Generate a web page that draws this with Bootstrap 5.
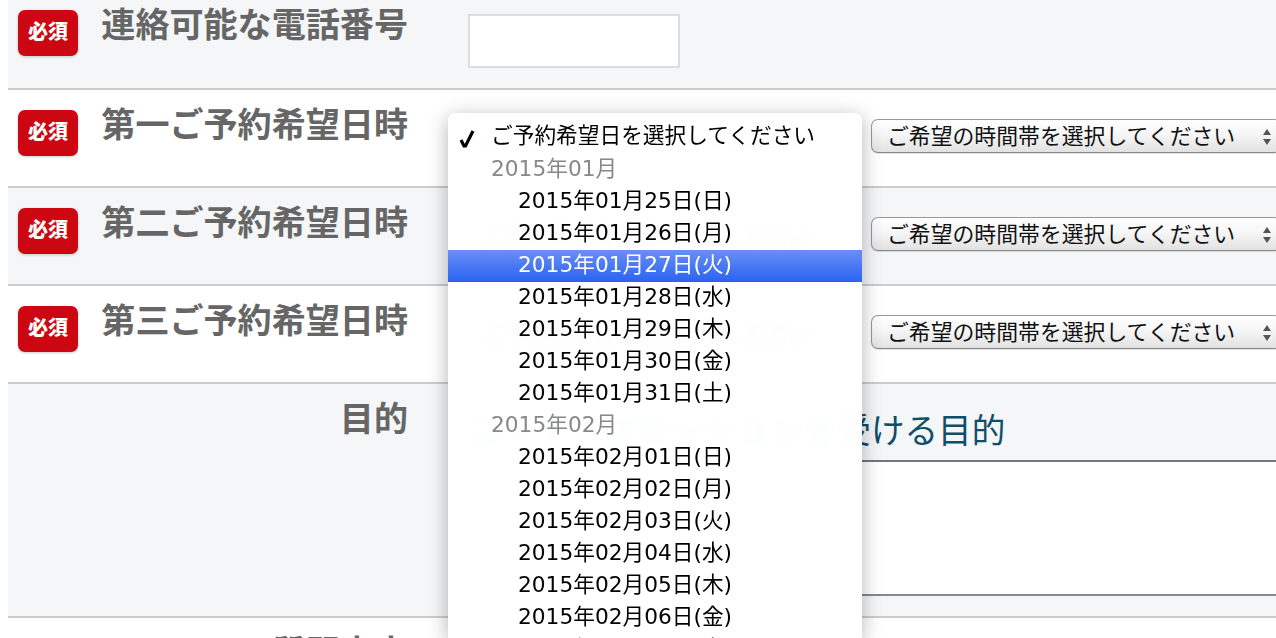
<!DOCTYPE html>
<html lang="ja"><head><meta charset="utf-8">
<link rel="stylesheet" href="https://cdn.jsdelivr.net/npm/bootstrap@5.3.0/dist/css/bootstrap.min.css">
<style>
html,body{height:638px;overflow:hidden;background:#fff}
.sheet{margin-left:8px;width:1268px;overflow:hidden;height:638px;font-family:"Noto Sans CJK JP",sans-serif}
.frow{border-bottom:2px solid #ccc;background:#fff}
.frow.tint{background:#f5f6f8}
.h88{height:90px}.h96{height:98px}.h232{height:234px}.h60{height:60px}
.lab{width:400px;flex:none;position:relative;font-size:34.1px;line-height:44px;font-weight:700;color:#666;text-align:right;padding-top:10px}
.lab.first{padding-top:2px;line-height:40px}
.must{position:absolute;left:10px;top:20px;width:60px;height:46px;border-radius:7px;background:#cc0711;color:#fff;font-size:20px;font-weight:900;padding-bottom:4px;line-height:1;box-shadow:0 1px 3px rgba(0,0,0,.2)}
.lab.first .must{top:10px}
.fld{flex:1;padding-left:60px;min-width:0}
.tel{width:212px;height:54px;margin-top:14px;border:2px solid #ddd;background:#fff}
.ctl-row{gap:13px;padding-top:29px;width:900px}
.pick{height:34px;border:1px solid #999;border-bottom-color:#888;border-radius:7px;background:linear-gradient(#fff 0%,#f6f6f6 45%,#e2e2e2 100%);font-family:"DejaVu Sans","Noto Sans CJK JP",sans-serif;font-size:21.85px;line-height:34px;color:#111;padding-left:15px;white-space:nowrap;box-shadow:0 1px 1px rgba(0,0,0,.12)}
.pick-a{width:390px}.pick-b{width:410px}
.pick svg{flex:none;margin:8px 7px 0 0}
.goal{font-size:33.6px;line-height:50px;color:#0d4f68;padding-top:20px;margin-bottom:6px;white-space:nowrap}
.goal-box{height:136px;background:#fff;border-top:2px solid #777;border-bottom:2px solid #888}
.menu{position:absolute;left:448px;top:113px;width:414px;height:525px;padding:9px 0;background:rgba(255,255,255,.975);backdrop-filter:blur(3px);border-radius:8px 8px 0 0;box-shadow:0 4px 20px rgba(0,0,0,.3);font-family:"DejaVu Sans","Noto Sans CJK JP",sans-serif;font-size:21.7px;color:#000;overflow:hidden}
.opt{height:32px;line-height:29px;padding-left:70px;white-space:nowrap}
.opt.grp{padding-left:43px;color:#888}
.opt.top{padding-left:43px;position:relative;line-height:28px}
.opt.on{background:linear-gradient(#6a8ff5,#2a62f2);color:#fff}
.tick{position:absolute;left:11px;top:7px}
</style></head><body>
<div class="sheet">
 <div class="frow tint h88 d-flex"><div class="lab first"><span class="must d-flex align-items-center justify-content-center">必須</span><span>連絡可能な電話番号</span></div><div class="fld"><div class="tel"></div></div></div>
 <div class="frow h96 d-flex"><div class="lab"><span class="must d-flex align-items-center justify-content-center">必須</span><span>第一ご予約希望日時</span></div><div class="fld"><div class="ctl-row d-flex"><div class="pick pick-a d-flex justify-content-between"><span>ご予約希望日を選択してください</span></div><div class="pick pick-b d-flex justify-content-between"><span>ご希望の時間帯を選択してください</span><svg width="12" height="18" viewBox="0 0 12 18"><path d="M6 1 10 7H2zM6 17 2 11h8z" fill="#555"/></svg></div></div></div></div>
 <div class="frow tint h96 d-flex"><div class="lab"><span class="must d-flex align-items-center justify-content-center">必須</span><span>第二ご予約希望日時</span></div><div class="fld"><div class="ctl-row d-flex"><div class="pick pick-a d-flex justify-content-between"><span>ご予約希望日を選択してください</span></div><div class="pick pick-b d-flex justify-content-between"><span>ご希望の時間帯を選択してください</span><svg width="12" height="18" viewBox="0 0 12 18"><path d="M6 1 10 7H2zM6 17 2 11h8z" fill="#555"/></svg></div></div></div></div>
 <div class="frow h96 d-flex"><div class="lab"><span class="must d-flex align-items-center justify-content-center">必須</span><span>第三ご予約希望日時</span></div><div class="fld"><div class="ctl-row d-flex"><div class="pick pick-a d-flex justify-content-between"><span>ご予約希望日を選択してください</span></div><div class="pick pick-b d-flex justify-content-between"><span>ご希望の時間帯を選択してください</span><svg width="12" height="18" viewBox="0 0 12 18"><path d="M6 1 10 7H2zM6 17 2 11h8z" fill="#555"/></svg></div></div></div></div>
 <div class="frow tint h232 d-flex"><div class="lab"><span>目的</span></div><div class="fld"><div class="goal">コーチングセッションを受ける目的</div><div class="goal-box"></div></div></div>
 <div class="frow h60 d-flex"><div class="lab"><span>質問内容</span></div></div>
</div>
<div class="menu">
 <div class="opt top"><svg class="tick" width="16" height="20" viewBox="0 0 16 20"><path d="M2 11l3 6h1.500L14 2" fill="none" stroke="#000" stroke-width="3.200"/></svg>ご予約希望日を選択してください</div>
 <div class="opt grp">2015年01月</div>
 <div class="opt">2015年01月25日(日)</div>
 <div class="opt">2015年01月26日(月)</div>
 <div class="opt on">2015年01月27日(火)</div>
 <div class="opt">2015年01月28日(水)</div>
 <div class="opt">2015年01月29日(木)</div>
 <div class="opt">2015年01月30日(金)</div>
 <div class="opt">2015年01月31日(土)</div>
 <div class="opt grp">2015年02月</div>
 <div class="opt">2015年02月01日(日)</div>
 <div class="opt">2015年02月02日(月)</div>
 <div class="opt">2015年02月03日(火)</div>
 <div class="opt">2015年02月04日(水)</div>
 <div class="opt">2015年02月05日(木)</div>
 <div class="opt">2015年02月06日(金)</div>
 <div class="opt">2015年02月07日(土)</div>
</div>
</body></html>
